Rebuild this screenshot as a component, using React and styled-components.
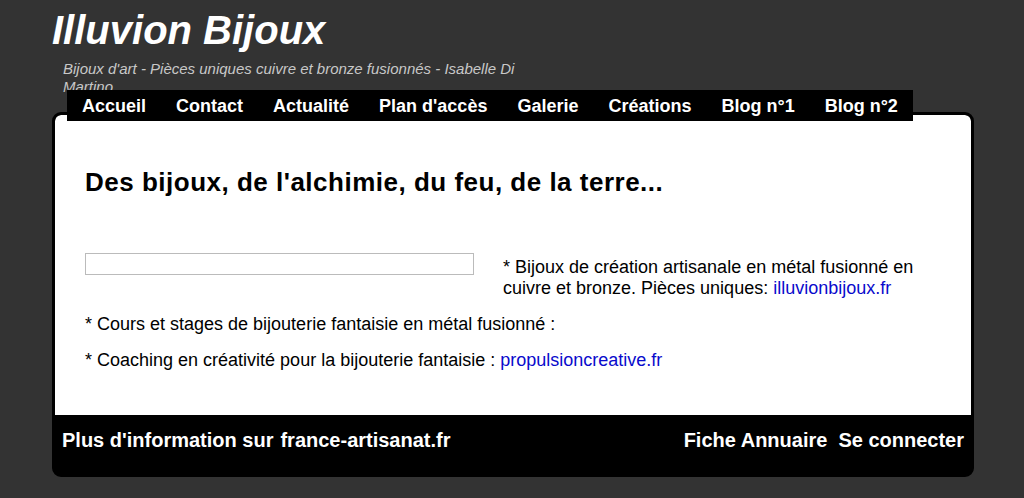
import React from 'react';
import styled, { createGlobalStyle } from 'styled-components';

const Global = createGlobalStyle`
  body {
    margin: 0;
    background: #333333;
    font-family: "Liberation Sans", Arial, sans-serif;
  }
`;

const Page = styled.div`
  width: 922px;
  margin-left: 52px;
  padding-top: 7px;
`;

const Title = styled.h1`
  margin: 0;
  font-size: 40px;
  line-height: 46px;
  font-style: italic;
  font-weight: bold;
  color: #fff;
`;

const Subtitle = styled.div`
  margin: 7px 0 0 11px;
  width: 465px;
  height: 20px;
  font-size: 15px;
  line-height: 18px;
  font-style: italic;
  color: #c8c8c8;
`;

const Nav = styled.ul`
  position: relative;
  z-index: 1;
  display: flex;
  width: fit-content;
  list-style: none;
  margin: 10px 0 -9px 15px;
  padding: 0;
  height: 31px;
  background: #000;
  align-items: center;
`;

const NavItem = styled.li`
  padding: 1px 15px 0;
  font-size: 18px;
  font-weight: bold;
  color: #fff;
`;

const Card = styled.div`
  border: 3px solid #000;
  border-radius: 9px;
  background: #000;
  overflow: hidden;
`;

const Content = styled.div`
  background: #fff;
  height: 300px;
  padding: 0 30px;
  box-sizing: border-box;
  overflow: hidden;
  border-radius: 6px 6px 0 0;
`;

const Heading = styled.h2`
  margin: 0;
  padding-top: 52px;
  font-size: 26px;
  line-height: 30px;
  letter-spacing: 0.5px;
  font-weight: bold;
  color: #000;
`;

const Columns = styled.div`
  display: grid;
  grid-template-columns: 389px 1fr;
  column-gap: 29px;
  margin-top: 55px;
`;

const EmptyBox = styled.div`
  margin-top: 1px;
  height: 20px;
  border: 1px solid #bbb;
`;

const Text = styled.p`
  margin: ${p => p.$top || 0}px 0 0;
  font-size: 18px;
  line-height: 21px;
  color: #000;
`;

const Link = styled.a`
  color: #0a0acc;
  text-decoration: none;
`;

const Footer = styled.div`
  display: flex;
  justify-content: space-between;
  height: 59px;
  padding: 14px 7px 0 7px;
  box-sizing: border-box;
  font-size: 20px;
  font-weight: bold;
  color: #fff;
`;

const FooterGroup = styled.div`
  display: flex;
  gap: ${p => p.$gap}px;
`;

const menu = ['Accueil', 'Contact', 'Actualité', "Plan d'accès", 'Galerie', 'Créations', 'Blog n°1', 'Blog n°2'];

export default function App() {
  return (
    <Page>
      <Global />
      <Title>Illuvion Bijoux</Title>
      <Subtitle>Bijoux d'art - Pièces uniques cuivre et bronze fusionnés - Isabelle Di Martino</Subtitle>
      <Nav>
        {menu.map(m => <NavItem key={m}>{m}</NavItem>)}
      </Nav>
      <Card>
        <Content>
          <Heading>Des bijoux, de l'alchimie, du feu, de la terre...</Heading>
          <Columns>
            <EmptyBox />
            <Text $top={5}>
              * Bijoux de création artisanale en métal fusionné en cuivre et bronze. Pièces uniques:{' '}
              <Link href="#">illuvionbijoux.fr</Link>
            </Text>
          </Columns>
          <Text $top={15}>* Cours et stages de bijouterie fantaisie en métal fusionné :</Text>
          <Text $top={15}>
            * Coaching en créativité pour la bijouterie fantaisie : <Link href="#">propulsioncreative.fr</Link>
          </Text>
        </Content>
        <Footer>
          <FooterGroup $gap={7}>
            <span>Plus d'information sur</span>
            <span>france-artisanat.fr</span>
          </FooterGroup>
          <FooterGroup $gap={11}>
            <span>Fiche Annuaire</span>
            <span>Se connecter</span>
          </FooterGroup>
        </Footer>
      </Card>
    </Page>
  );
}
